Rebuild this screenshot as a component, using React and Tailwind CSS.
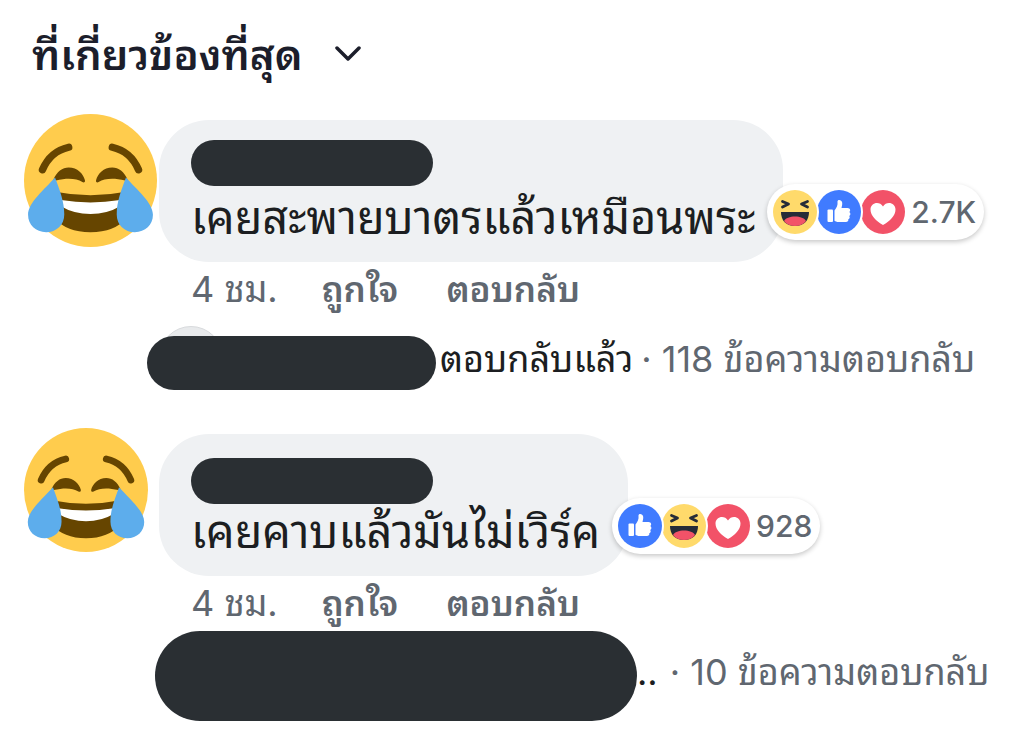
import React from 'react';
import { clsx } from 'clsx';

const comments = [
  {
    id: 1,
    text: 'เคยสะพายบาตรแล้วเหมือนพระ',
    time: '4 ชม.',
    reactions: ['haha', 'like', 'love'],
    count: '2.7K',
    large: true,
  },
  {
    id: 2,
    text: 'เคยคาบแล้วมันไม่เวิร์ค',
    time: '4 ชม.',
    reactions: ['like', 'haha', 'love'],
    count: '928',
    large: false,
  },
];

const JoyFace = ({ className }) => (
  <svg viewBox="0 0 36 36" className={className} role="img" aria-label="avatar">
    <circle cx="18" cy="18" r="18" fill="#ffcc4d" />
    <g fill="none" stroke="#664500" strokeWidth="2" strokeLinecap="round">
      <path d="M5 15.1C6.4 11.8 9 9.7 12.1 9" />
      <path d="M31 15.1C29.6 11.8 27 9.7 23.9 9" />
    </g>
    <g fill="#664500">
      <path d="M7.9 17.9C8.9 15.6 10.4 14.5 12.1 14.5C14.5 14.5 16 16.2 16.500 17.900C16.600 18.400 16.200 18.700 15.800 18.400C14.200 17.500 12 17.200 8.600 18Z" />
      <path d="M28.100 17.900C27.100 15.600 25.600 14.500 23.900 14.500C21.500 14.500 20 16.200 19.500 17.900C19.400 18.400 19.800 18.700 20.200 18.400C21.800 17.500 24 17.200 27.400 18Z" />
      <path d="M8 21Q18 23 28 21V28Q24.500 32 18 32T8 28Z" />
    </g>
    <path fill="#fff" d="M10 23.300Q18 24.600 26 23.300V25Q22.500 27.100 18 27.100T10 25Z" />
    <g fill="#5dadec">
      <path d="M8.400 17.200C5.500 20.500 1.100 24 1.100 27.300C1.100 30.100 3.200 32 6 32C8.800 32 10.900 30 10.900 27.200C10.900 23.600 9.700 20.800 8.400 17.200Z" />
      <path d="M27.600 17.200C30.500 20.500 34.900 24 34.900 27.300C34.900 30.100 32.800 32 30 32C27.200 32 25.100 30 25.100 27.200C25.100 23.600 26.300 20.800 27.600 17.200Z" />
    </g>
  </svg>
);

const ReactionIcon = ({ type }) => (
  <svg viewBox="0 0 44 44" className="size-11 shrink-0" role="img" aria-label={type}>
    {type === 'haha' && (
      <>
        <circle cx="22" cy="22" r="22" fill="#ffda6b" />
        <g fill="none" stroke="#262c38" strokeWidth="2.800" strokeLinejoin="round" strokeLinecap="round">
          <path d="M9.500 11.500L15.500 14L9.500 17" />
          <path d="M34.500 11.500L28.500 14L34.500 17" />
        </g>
        <path d="M8 22H36C36 30.500 31 36 22 36S8 30.500 8 22Z" fill="#262c38" />
        <path d="M11 31C12.500 28 17 26.500 22 26.500S31.500 28 33 31C30.500 34.500 26.500 36 22 36S13.500 34.500 11 31Z" fill="#f25268" />
      </>
    )}
    {type === 'like' && (
      <>
        <circle cx="22" cy="22" r="22" fill="#407bff" />
        <rect x="10.500" y="19.500" width="5.500" height="12.500" rx="1" fill="#fff" />
        <path
          d="M17.500 20.500C19.500 18 21 15.500 20.500 11.500C20.300 9.200 24.800 9.300 25.200 12.800C25.400 14.800 24.800 16.600 24.500 18H30.500C33.500 18 33.800 21.200 32.300 22C34 23.200 33.600 25.300 32.200 25.900C33.200 27 32.600 28.900 31.300 29.300C31.700 31 30.400 32 29 32H21.500C19.500 32 18.500 31.300 17.500 30.700Z"
          fill="#fff"
        />
      </>
    )}
    {type === 'love' && (
      <>
        <circle cx="22" cy="22" r="22" fill="#f25268" />
        <path d="M22 35C15 31 9.500 25.500 9.500 19.500C9.500 12.500 18.500 10.500 22 16.500C25.500 10.500 34.500 12.500 34.500 19.500C34.500 25.500 29 31 22 35Z" fill="#fff" />
      </>
    )}
  </svg>
);

// each icon's white ring cuts into the one after it
const stack = ['z-20', 'z-10 -ml-1', 'z-0 -ml-1'];

const Reactions = ({ types, count }) => (
  <button className="absolute bottom-[22px] left-full -ml-4 flex items-center rounded-full bg-white py-1 pr-2 pl-1 shadow-[0_2px_5px_rgba(0,0,0,0.22)]">
    {types.map((type, i) => (
      <span key={type} className={clsx('relative rounded-full bg-white p-0.5', stack[i])}>
        <ReactionIcon type={type} />
      </span>
    ))}
    <span className="ml-1 text-[30px] leading-8 font-medium text-[#606770]">{count}</span>
  </button>
);

const Comment = ({ comment, children }) => (
  <article className="flex items-start">
    <div className="-mt-1.5 w-[159px] shrink-0 pl-6">
      <JoyFace className={comment.large ? 'size-[133px]' : 'size-[124px]'} />
    </div>
    <div className="min-w-0 flex-1">
      <div className={clsx('relative w-fit rounded-[50px] bg-[#eff1f3] pr-7 pb-4 pl-8', comment.large ? 'pt-5' : 'pt-6')}>
        <div className={clsx('h-[46px] w-[242px] rounded-full bg-[#2a2f33]', comment.large && 'mb-1')} />
        <p className="text-[45px] leading-[56px] whitespace-nowrap text-[#1c1e21]">{comment.text}</p>
        <Reactions types={comment.reactions} count={comment.count} />
      </div>
      <div className="flex h-[54px] items-center gap-11 pl-8 text-[36px] whitespace-nowrap text-[#606770]">
        <span>{comment.time}</span>
        <div className="flex gap-12 text-[35px] font-semibold">
          <button>ถูกใจ</button>
          <button>ตอบกลับ</button>
        </div>
      </div>
      {children}
    </div>
  </article>
);

const App = () => {
  return (
    <main
      className="min-h-screen overflow-hidden bg-white pb-3"
      style={{ fontFamily: 'Inter, "Noto Sans Thai Looped", Loma, Garuda, Waree, "Noto Sans Thai", "Noto Sans", sans-serif' }}
    >
      <header className="px-8 pt-6">
        <button className="flex h-[60px] items-center gap-8 text-[42px] font-semibold whitespace-nowrap text-[#1c1e2b]">
          ที่เกี่ยวข้องที่สุด
          <svg viewBox="0 0 26 16" className="h-4 w-[26px]" fill="none" stroke="currentColor" strokeWidth="3.500" strokeLinecap="round" strokeLinejoin="round">
            <path d="M2 2L13 13L24 2" />
          </svg>
        </button>
      </header>

      <section className="mt-9">
        <Comment comment={comments[0]}>
          <div className="relative mt-5 -ml-3 flex h-[54px] items-center text-[36px] leading-[48px] whitespace-nowrap">
            <span className="absolute bottom-0 left-3 size-16 rounded-full border border-[#d8dadd] bg-[#e8eaec]" />
            <span className="relative mr-1 h-[54px] w-[289px] shrink-0 rounded-full bg-[#2a2f33]" />
            <div className="flex gap-2 pb-2">
              <a href="#replies" className="text-[#1c1e21]">ตอบกลับแล้ว</a>
              <a href="#replies" className="text-[#606770]">· 118 ข้อความตอบกลับ</a>
            </div>
          </div>
        </Comment>
      </section>

      <section className="mt-11">
        <Comment comment={comments[1]}>
          <div className="mt-px -ml-1 flex items-center text-[36px] leading-[48px] whitespace-nowrap">
            <span className="h-[90px] w-[482px] shrink-0 rounded-full bg-[#2a2f33]" />
            <div className="flex gap-3 pb-2">
              <a href="#replies" className="text-[#1c1e21]">..</a>
              <a href="#replies" className="text-[#606770]">· 10 ข้อความตอบกลับ</a>
            </div>
          </div>
        </Comment>
      </section>
    </main>
  );
};

export default App;
